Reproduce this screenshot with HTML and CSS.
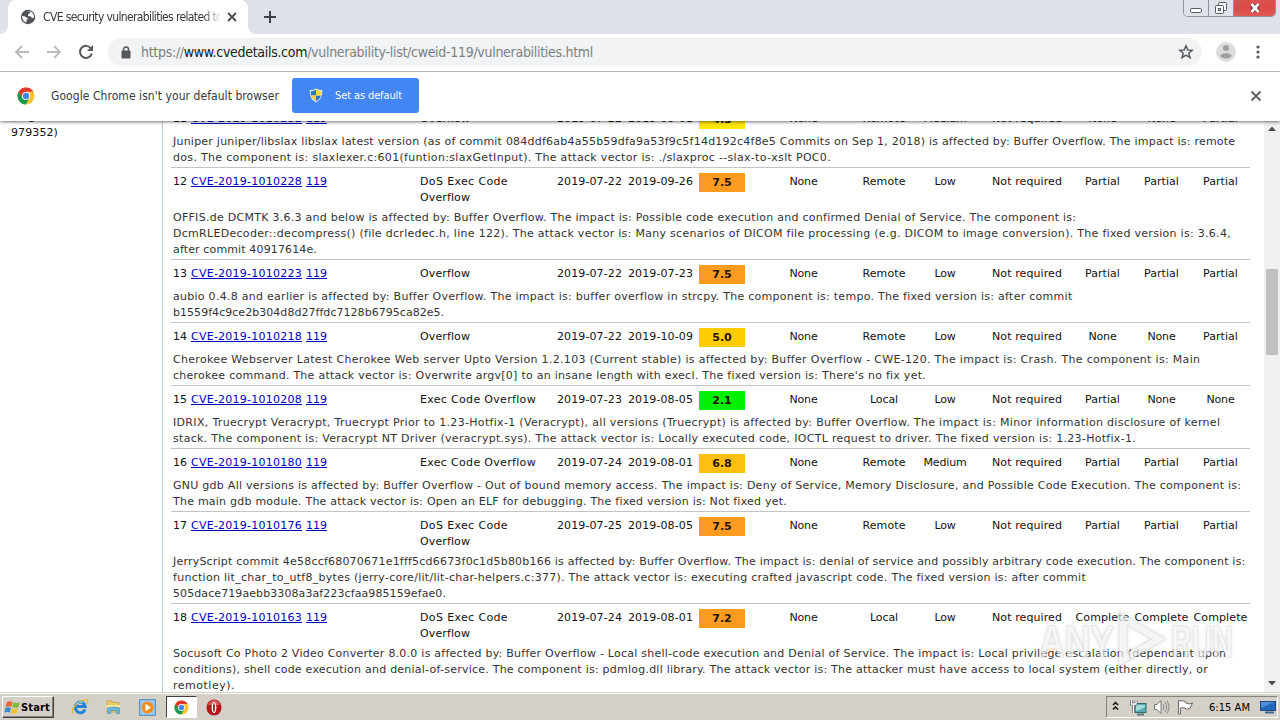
FILE: index.html
```html
<!DOCTYPE html>
<html lang="en">
<head>
<meta charset="utf-8">
<title>CVE security vulnerabilities</title>
<link rel="stylesheet" href="styles.css">
</head>
<body>
<div class="screen">
  <header class="tabstrip">
    <div class="oldtab"></div>
    <div class="tab">
      <svg class="globe" width="16" height="16" viewBox="0 0 16 16"><circle cx="8" cy="8" r="7.2" fill="#50545a"/><path d="M2 7 L5 7.500 8 9.500 6.500 11 6.500 13.500 Q2 12 2 7ZM6.500 2.500 L10 2 10 4 8 5.500 8 7 11 7.500 12 9 14 8.500 Q14 4 10.500 2.500Z" fill="#fff"/></svg>
      <span class="tabtitle" data-w="179">CVE security vulnerabilities related to</span>
      <svg class="tabx" width="10" height="10" viewBox="0 0 10 10"><path d="M1 1 9 9M9 1 1 9" stroke="#4a4d52" stroke-width="1.8"/></svg>
    </div>
    <div class="flare"></div>
    <svg class="plus" width="14" height="14" viewBox="0 0 14 14"><path d="M7 1V13M1 7H13" stroke="#3c4043" stroke-width="2"/></svg>
    <div class="winbtns">
      <div class="wb min"><svg width="14" height="8" viewBox="0 0 14 8"><rect x="1.5" y="2.5" width="11" height="4" rx="1" fill="#fff" stroke="#555a68"/></svg></div>
      <div class="wb max"><svg width="14" height="14" viewBox="0 0 14 14"><rect x="4.5" y="1.500" width="8" height="8" rx="1" fill="#f4f5f8" stroke="#555a68"/><rect x="1.500" y="4.500" width="8" height="8" rx="1" fill="#fff" stroke="#555a68"/><rect x="4.500" y="7.500" width="2" height="2" fill="none" stroke="#555a68"/></svg></div>
      <div class="wb close"><svg width="14" height="12" viewBox="0 0 14 12"><path d="M3.500 2.500 10.500 9.500M10.500 2.500 3.500 9.500" stroke="#6b2530" stroke-width="4.500"/><path d="M3.500 2 10.500 10M10.500 2 3.500 10" stroke="#fff" stroke-width="2.800"/></svg></div>
    </div>
  </header>
  <div class="toolbar">
    <svg class="nav" width="16" height="16" viewBox="0 0 16 16"><path d="M15 8H2M8 2 2 8 8 14" fill="none" stroke="#b9bbbe" stroke-width="1.800"/></svg>
    <svg class="nav" width="16" height="16" viewBox="0 0 16 16"><path d="M1 8H14M8 2 14 8 8 14" fill="none" stroke="#b9bbbe" stroke-width="1.800"/></svg>
    <svg class="nav" width="16" height="16" viewBox="0 0 16 16"><path d="M13 4.500A6 6 0 1 0 13.800 9.500" fill="none" stroke="#55595e" stroke-width="2"/><path d="M15 1V7H9Z" fill="#55595e"/></svg>
    <div class="omni">
      <svg class="lock" width="10" height="13" viewBox="0 0 10 13"><rect x="0.500" y="4.500" width="9" height="8" rx="1" fill="#55595e"/><path d="M2.500 5V3.500a2.500 2.500 0 0 1 5 0V5" fill="none" stroke="#55595e" stroke-width="1.500"/></svg>
      <span class="url" data-w="452">https://<b>www.cvedetails.com</b>/vulnerability-list/cweid-119/vulnerabilities.html</span>
      <svg class="star" width="16" height="16" viewBox="0 0 16 16"><path d="M8 1.800 9.800 6 14.300 6.300 10.800 9.200 12 13.700 8 11.200 4 13.700 5.200 9.200 1.700 6.300 6.200 6Z" fill="none" stroke="#55595e" stroke-width="1.500"/></svg>
    </div>
    <svg class="avatar" width="20" height="20" viewBox="0 0 20 20"><circle cx="10" cy="10" r="10" fill="#dddddf"/><circle cx="10" cy="6" r="3" fill="#9d9fa2"/><ellipse cx="10" cy="13.800" rx="5.600" ry="2.600" fill="#9d9fa2"/></svg>
    <svg class="dots" width="4" height="16" viewBox="0 0 4 16"><circle cx="2" cy="3" r="1.600" fill="#55595e"/><circle cx="2" cy="8" r="1.600" fill="#55595e"/><circle cx="2" cy="13" r="1.600" fill="#55595e"/></svg>
  </div>
  <div class="infobar">
    <svg class="chrome" width="18" height="18" viewBox="0 0 18 18"><circle cx="9" cy="9" r="8.500" fill="#fbc52d"/><path d="M1.600 4.800A8.500 8.500 0 0 1 16.400 4.800H9L5.300 11Z" fill="#e2382c"/><path d="M1.600 4.800A8.500 8.500 0 0 0 8.600 17.500L12.600 11 9 13 5.300 11Z" fill="#159a55"/><circle cx="9" cy="9" r="4.100" fill="#fff"/><circle cx="9" cy="9" r="3.200" fill="#4285f4"/></svg>
    <span class="infotext" data-w="228">Google Chrome isn't your default browser</span>
    <div class="setdef">
      <svg width="14" height="15" viewBox="0 0 14 15"><path d="M7 .5Q10 2.200 13.300 2 13.800 11 7 14.500 .2 11 .7 2 4 2.200 7 .5Z" fill="#e9eef4"/><path d="M7 1.800V7.500H1.900V3.200Q5 3.200 7 1.800ZM7 7.500H12Q11 11.500 7 13.300Z" fill="#2f79c4"/><path d="M7 1.800Q9 3.200 12.100 3.200V7.500H7ZM7 7.500V13.300Q3 11.500 2 7.500Z" fill="#f8d33c"/></svg>
      <span data-w="67">Set as default</span>
    </div>
    <svg class="infox" width="12" height="12" viewBox="0 0 12 12"><path d="M1.500 1.500 10.500 10.500M10.500 1.500 1.500 10.500" stroke="#5c5f63" stroke-width="1.900"/></svg>
  </div>
  <main class="view">
    <aside class="side"><div class="sidetext"><div>(Page 1 of</div><div data-w="47">979352)</div></div></aside>
    <section class="list" id="list"></section>
    <div class="scroll">
      <svg width="16" height="16" viewBox="0 0 16 16"><path d="M4 10 8 5.500 12 10Z" fill="#4d4d4d"/></svg>
      <div class="thumb"></div>
      <svg width="16" height="17" viewBox="0 0 16 17"><path d="M4 6 8 10.500 12 6Z" fill="#4d4d4d"/></svg>
    </div>
    <svg class="mark" width="200" height="64" viewBox="0 0 200 64">
      <text x="2" y="50" textLength="75" lengthAdjust="spacingAndGlyphs">ANY</text>
      <text x="134" y="50" textLength="62" lengthAdjust="spacingAndGlyphs">RUN</text>
      <path d="M82 5 L129 32 82 59ZM90 18V46L115 32Z"/>
    </svg>
  </main>
  <footer class="taskbar">
    <div class="start">
      <svg width="17" height="15" viewBox="0 0 17 15"><path d="M3 2Q6 .5 8.500 2L7.300 6.800Q4.800 5.500 1.600 7Z" fill="#e8642c"/><path d="M9.500 2.300Q12.500 3.800 15.800 2.300L14.300 7.300Q11.500 8.500 8.300 7Z" fill="#7fb93a"/><path d="M1.400 8Q4.500 6.600 7 8L5.800 12.700Q3.300 11.300 .2 12.800Z" fill="#3f8bd3"/><path d="M8 8.300Q11 9.700 14 8.300L12.700 13.200Q10 14.500 6.800 13Z" fill="#f5bf34"/></svg>
      <span data-w="29">Start</span>
    </div>
    <svg class="t-ie" width="18" height="18" viewBox="0 0 18 18"><path d="M14 11.500A5 5.400 0 1 1 14.300 8.500H5" fill="none" stroke="#2382d6" stroke-width="3"/><path d="M2 15.500Q-.5 12 6 6 14 0 16.500 2.200 17.500 3.500 15.500 6" fill="none" stroke="#e5b833" stroke-width="1.300"/><path d="M5 6Q8 3 12 4.500" fill="none" stroke="#86cdf5" stroke-width="1.200"/></svg>
    <svg class="t-folder" width="17" height="17" viewBox="0 0 17 17"><path d="M2 2H7L8 3.500H14V13H2Z" fill="#eacb67" stroke="#c9a545"/><path d="M1.500 6H15V12H1.500Z" fill="#fae79a"/><path d="M2.500 14.500V9Q8 7 14.500 9V14.500H11.500V11.500H5.500V14.500Z" fill="#6ab7df" stroke="#428eb9" stroke-width=".7"/></svg>
    <svg class="t-media" width="17" height="17" viewBox="0 0 17 17"><rect x=".7" y=".7" width="15.600" height="15.600" fill="#9dccef" stroke="#4088c2"/><circle cx="8.500" cy="8.500" r="6" fill="#f48a1c"/><path d="M6.500 4.800 12 8.500 6.500 12.200Z" fill="#fff"/></svg>
    <div class="active"><svg width="15" height="15" viewBox="0 0 18 18"><circle cx="9" cy="9" r="8.500" fill="#fbc52d"/><path d="M1.600 4.800A8.500 8.500 0 0 1 16.400 4.800H9L5.300 11Z" fill="#e2382c"/><path d="M1.600 4.800A8.500 8.500 0 0 0 8.600 17.500L12.600 11 9 13 5.300 11Z" fill="#159a55"/><circle cx="9" cy="9" r="4.100" fill="#fff"/><circle cx="9" cy="9" r="3.200" fill="#4285f4"/></svg></div>
    <svg class="t-opera" width="16" height="17" viewBox="0 0 16 17"><ellipse cx="8" cy="8.500" rx="7.500" ry="8" fill="#b5141a"/><path d="M2 6Q4 1 8 1T14 6Z" fill="#d9585a"/><ellipse cx="8" cy="8.500" rx="2.400" ry="5.500" fill="#fff"/><ellipse cx="8" cy="8.500" rx=".9" ry="4.500" fill="#a01217"/></svg>
    <div class="tray">
      <svg class="chev" width="7" height="10" viewBox="0 0 7 10"><path d="M1 4 3.500 1.500 6 4M1 8.500 3.500 6 6 8.500" fill="none" stroke="#111" stroke-width="1.500"/></svg>
      <svg class="t-net" width="17" height="17" viewBox="0 0 17 17"><rect x="5" y="4.500" width="11" height="9" fill="#57aeb0" stroke="#35696b"/><path d="M6 6H15V8Q10 11 6 12Z" fill="#a4dcdb"/><path d="M7 15.500H14" stroke="#58797a" stroke-width="2"/><path d="M1.500 1V5H6V1M3.500 5V14" fill="none" stroke="#666" stroke-width="2.800"/><path d="M1.500 1V5H6V1M3.500 5V14" fill="none" stroke="#fff" stroke-width="1.300"/></svg>
      <svg class="t-vol" width="17" height="16" viewBox="0 0 17 16"><path d="M1.500 5.500H4L8 1.500V14.500L4 10.500H1.500Z" fill="#fff" stroke="#777"/><path d="M10 5Q12 8 10 11M12 3Q15.500 8 12 13M14 1.500Q18 8 14 14.500" fill="none" stroke="#888"/></svg>
      <svg class="t-flag" width="17" height="16" viewBox="0 0 17 16"><path d="M3.500 2Q6 1 9 3V4Q12 6 15.500 4L13 9.500Q9 11 7.500 9 5 8 3.500 9V15H1.500V1.500H3.500Z" fill="#fff" stroke="#666"/></svg>
      <span class="clock" data-w="41">6:15 AM</span>
      <svg class="t-show" width="16" height="14" viewBox="0 0 16 14"><rect x=".5" y="1.500" width="15" height="9" fill="#2166bd" stroke="#264a80"/><path d="M1 2H14L1 8Z" fill="#4c8fd8"/><path d="M5 12.500H14" stroke="#3f668f" stroke-width="2"/></svg>
    </div>
  </footer>
</div>
<script src="app.js"></script>
</body>
</html>
```
FILE: styles.css
```css
* { box-sizing: border-box; }
body { margin: 0; font-family: "DejaVu Sans", Verdana, sans-serif; font-size: 11px; overflow: hidden; }
svg { display: block; flex: none; }
.screen { width: 1280px; height: 720px; display: flex; flex-direction: column; background: #fff; overflow: hidden; }
[data-w] { white-space: pre; }
.tabstrip { height: 34px; flex: none; background: #dee1e9; display: flex; align-items: flex-start; }
.oldtab, .flare { width: 8px; height: 8px; margin-top: 26px; background: radial-gradient(circle at 0 0, #dee1e9 7.500px, #fff 8.200px); }
.flare { background: radial-gradient(circle at 8px 0, #dee1e9 7.500px, #fff 8.200px); }
.tab { width: 240px; height: 34px; background: #fff; border-radius: 8px 8px 0 0; display: flex; align-items: center; padding-left: 12px; }
.tabtitle { width: 177px; margin: 0 10px 0 7px; overflow: hidden; font: 12px "DejaVu Sans Condensed", "DejaVu Sans", sans-serif; color: #35383c; -webkit-mask-image: linear-gradient(90deg, #000 160px, transparent 179px); }
.tabx { margin-left: -3px; }
.plus { margin: 10px 0 0 7px; }
.winbtns { margin-left: auto; margin-right: 4px; height: 17px; display: flex; border: 1px solid #8e93a0; border-top: 0; border-radius: 0 0 5px 5px; overflow: hidden; }
.wb { display: flex; justify-content: center; align-items: center; height: 16px; width: 25px; background: #dfe2e9; border-right: 1px solid #8e93a0; }
.wb.min { padding-top: 4px; }
.wb.close { width: 41px; background: linear-gradient(#d9534f, #dc4a48 50%, #e35a55); border-right: 0; }
.toolbar { height: 38px; flex: none; border-bottom: 1px solid #b4b4b4; display: flex; align-items: center; padding: 0 0 1px 14px; }
.nav { margin-right: 16px; }
.omni { width: 1094px; height: 28px; margin-left: -2px; border-radius: 14px; background: #f1f3f5; display: flex; align-items: center; padding-left: 13px; padding-right: 8px; }
.url { margin-left: 10px; font: 14px "DejaVu Sans Condensed", "DejaVu Sans", sans-serif; color: #7b7f84; }
.url b { font-weight: normal; color: #202124; }
.star { margin-left: auto; }
.avatar { margin-left: 14px; }
.dots { margin-left: 20px; }
.infobar { height: 49px; flex: none; display: flex; align-items: center; padding: 0 0 2px 17px; background: #fff; box-shadow: 0 0 4px rgba(0,0,0,.85); clip-path: inset(0 0 -8px 0); position: relative; z-index: 2; }
.infotext { margin-left: 16px; font: 12px "DejaVu Sans Condensed", "DejaVu Sans", sans-serif; color: #35383c; }
.setdef { margin-left: 13px; width: 127px; height: 35px; border-radius: 3px; background: #4285f4; color: #fff; display: flex; align-items: center; padding-left: 17px; font: 11px "DejaVu Sans Condensed", "DejaVu Sans", sans-serif; }
.setdef span { margin-left: 12px; }
.infox { margin-left: auto; margin-right: 18px; }
.view { flex: 1; min-height: 0; display: flex; overflow: hidden; position: relative; }
.side { width: 163px; flex: none; border-right: 1px solid #b8cce0; }
.sidetext { margin-top: -12px; padding-left: 11px; line-height: 16px; color: #111; }
.list { width: 1079px; margin: -16px 0 0 8px; flex: none; }
.row { border-bottom: 1px solid #c4c4c4; padding: 5px 0 2px 2px; }
.main { display: grid; grid-template-columns: 18px 115px 114px 137px 71px 71px 46px 117px 44px 78px 86px 3px 59px 59px 59px; min-height: 19px; line-height: 18px; color: #111; align-items: start; }
.main > div { margin-bottom: -2px; }
.main > div > div + div { margin-top: -2px; }
.main .c { text-align: center; white-space: nowrap; }
.main a { color: #0000c0; text-decoration: underline; }
.main > .score { height: 19px; line-height: 20px; margin: 0; font-weight: bold; text-align: center; color: #201400; }
.desc { margin-top: 4px; line-height: 18px; color: #333; }
.desc div { height: 16px; }
.scroll { margin-left: auto; width: 16px; background: #f1f1f1; display: flex; flex-direction: column; }
.thumb { width: 12px; height: 86px; margin: 132px auto auto; background: #c1c1c1; }
.mark { position: absolute; left: 1037px; top: 486px; overflow: visible; }
.mark text, .mark path { fill: rgba(255,255,255,.6); stroke: rgba(160,160,160,.15); stroke-width: 1.5px; fill-rule: evenodd; font: bold 44px "Liberation Sans", sans-serif; filter: drop-shadow(0 0 2px rgba(100,100,100,.3)); }
.taskbar { height: 28px; flex: none; background: #d4d0c8; box-shadow: inset 0 1px #d4d0c8, inset 0 2px #fff; display: flex; align-items: center; padding: 2px 2px 0; font: 11px "DejaVu Sans Condensed", "DejaVu Sans", sans-serif; }
.start { width: 52px; height: 22px; border: 1px solid; border-color: #fff #404040 #404040 #fff; box-shadow: inset -1px -1px #87837c; display: flex; align-items: center; padding-left: 1px; font-weight: bold; color: #000; }
.t-ie { margin-left: 17px; }
.t-folder { margin-left: 16px; }
.t-media { margin-left: 17px; }
.active { margin-left: 10px; width: 31px; height: 22px; background: #fff; border: 1px solid; border-color: #404040 #fff #fff #404040; display: flex; align-items: center; justify-content: center; }
.t-opera { margin-left: 9px; }
.tray { margin-left: auto; width: 172px; height: 22px; border: 1px solid; border-color: #87837c #fff #fff #87837c; display: flex; align-items: center; color: #000; }
.chev { margin: 0 11px 3px 5px; }
.t-vol { margin-left: 6px; }
.t-flag { margin-left: 7px; }
.clock { margin-left: 15px; width: 41px; }
.t-show { margin-left: 10px; }
```
FILE: app.js
```js
const rows = [
  [11, "CVE-2019-1010232", ["Overflow"], "2019-07-22", "2019-08-01", "4.3", "#ffe600", "None", "Remote", "Medium", "None", "None", "Partial",
    [["Juniper juniper/libslax libslax latest version (as of commit 084ddf6ab4a55b59dfa9a53f9c5f14d192c4f8e5 Commits on Sep 1, 2018) is affected by: Buffer Overflow. The impact is: remote", 1062],
     ["dos. The component is: slaxlexer.c:601(funtion:slaxGetInput). The attack vector is: ./slaxproc --slax-to-xslt POC0.", 658]]],
  [12, "CVE-2019-1010228", ["DoS Exec Code", "Overflow"], "2019-07-22", "2019-09-26", "7.5", "#ff9c20", "None", "Remote", "Low", "Partial", "Partial", "Partial",
    [["OFFIS.de DCMTK 3.6.3 and below is affected by: Buffer Overflow. The impact is: Possible code execution and confirmed Denial of Service. The component is:", 903],
     ["DcmRLEDecoder::decompress() (file dcrledec.h, line 122). The attack vector is: Many scenarios of DICOM file processing (e.g. DICOM to image conversion). The fixed version is: 3.6.4,", 1058],
     ["after commit 40917614e.", 144]]],
  [13, "CVE-2019-1010223", ["Overflow"], "2019-07-22", "2019-07-23", "7.5", "#ff9c20", "None", "Remote", "Low", "Partial", "Partial", "Partial",
    [["aubio 0.4.8 and earlier is affected by: Buffer Overflow. The impact is: buffer overflow in strcpy. The component is: tempo. The fixed version is: after commit", 899],
     ["b1559f4c9ce2b304d8d27ffdc7128b6795ca82e5.", 271]]],
  [14, "CVE-2019-1010218", ["Overflow"], "2019-07-22", "2019-10-09", "5.0", "#ffcc00", "None", "Remote", "Low", "None", "None", "Partial",
    [["Cherokee Webserver Latest Cherokee Web server Upto Version 1.2.103 (Current stable) is affected by: Buffer Overflow - CWE-120. The impact is: Crash. The component is: Main", 1027],
     ["cherokee command. The attack vector is: Overwrite argv[0] to an insane length with execl. The fixed version is: There's no fix yet.", 753]]],
  [15, "CVE-2019-1010208", ["Exec Code Overflow"], "2019-07-23", "2019-08-05", "2.1", "#00f000", "None", "Local", "Low", "Partial", "None", "None",
    [["IDRIX, Truecrypt Veracrypt, Truecrypt Prior to 1.23-Hotfix-1 (Veracrypt), all versions (Truecrypt) is affected by: Buffer Overflow. The impact is: Minor information disclosure of kernel", 1047],
     ["stack. The component is: Veracrypt NT Driver (veracrypt.sys). The attack vector is: Locally executed code, IOCTL request to driver. The fixed version is: 1.23-Hotfix-1.", 963]]],
  [16, "CVE-2019-1010180", ["Exec Code Overflow"], "2019-07-24", "2019-08-01", "6.8", "#ffbf10", "None", "Remote", "Medium", "Partial", "Partial", "Partial",
    [["GNU gdb All versions is affected by: Buffer Overflow - Out of bound memory access. The impact is: Deny of Service, Memory Disclosure, and Possible Code Execution. The component is:", 1068],
     ["The main gdb module. The attack vector is: Open an ELF for debugging. The fixed version is: Not fixed yet.", 614]]],
  [17, "CVE-2019-1010176", ["DoS Exec Code", "Overflow"], "2019-07-25", "2019-08-05", "7.5", "#ff9c20", "None", "Remote", "Low", "Partial", "Partial", "Partial",
    [["JerryScript commit 4e58ccf68070671e1fff5cd6673f0c1d5b80b166 is affected by: Buffer Overflow. The impact is: denial of service and possibly arbitrary code execution. The component is:", 1072],
     ["function lit_char_to_utf8_bytes (jerry-core/lit/lit-char-helpers.c:377). The attack vector is: executing crafted javascript code. The fixed version is: after commit", 913],
     ["505dace719aebb3308a3af223cfaa985159efae0.", 273]]],
  [18, "CVE-2019-1010163", ["DoS Exec Code", "Overflow"], "2019-07-24", "2019-08-01", "7.2", "#ff9c20", "None", "Local", "Low", "Complete", "Complete", "Complete",
    [["Socusoft Co Photo 2 Video Converter 8.0.0 is affected by: Buffer Overflow - Local shell-code execution and Denial of Service. The impact is: Local privilege escalation (dependant upon", 1053],
     ["conditions), shell code execution and denial-of-service. The component is: pdmlog.dll library. The attack vector is: The attacker must have access to local system (either directly, or", 1035],
     ["remotley).", 62]]]
];

const widths = { "Overflow": 50, "DoS Exec Code": 88, "Exec Code Overflow": 116, "None": 28, "Remote": 43, "Local": 28, "Low": 21, "Medium": 43, "Partial": 35, "Complete": 54, "Not required": 70 };
const fit = (t, w) => `<span data-w="${w || widths[t]}">${t}</span>`;
const cell = t => `<div class="c">${fit(t)}</div>`;

document.getElementById("list").innerHTML = rows.map(r => `
<article class="row"><div class="main">
<div>${fit(r[0], 14)}</div><div><a href="#">${fit(r[1], 111)}</a></div><div><a href="#">${fit("119", 21)}</a></div>
<div>${r[2].map(t => `<div>${fit(t)}</div>`).join("")}</div>
<div>${fit(r[3], 65)}</div><div>${fit(r[4], 65)}</div>
<div class="score" style="background:${r[6]}">${r[5]}</div>
${cell(r[7])}${cell(r[8])}${cell(r[9])}${cell("Not required")}<div></div>${cell(r[10])}${cell(r[11])}${cell(r[12])}
</div><div class="desc">${r[13].map(l => `<div>${fit(l[0], l[1])}</div>`).join("")}</div></article>`).join("");

// Spread the letters of each label over its column width.
document.querySelectorAll("[data-w]").forEach(el => {
  const range = document.createRange();
  range.selectNodeContents(el);
  const extra = el.dataset.w - range.getBoundingClientRect().width;
  el.style.letterSpacing = (extra / el.textContent.length) + "px";
});
```
